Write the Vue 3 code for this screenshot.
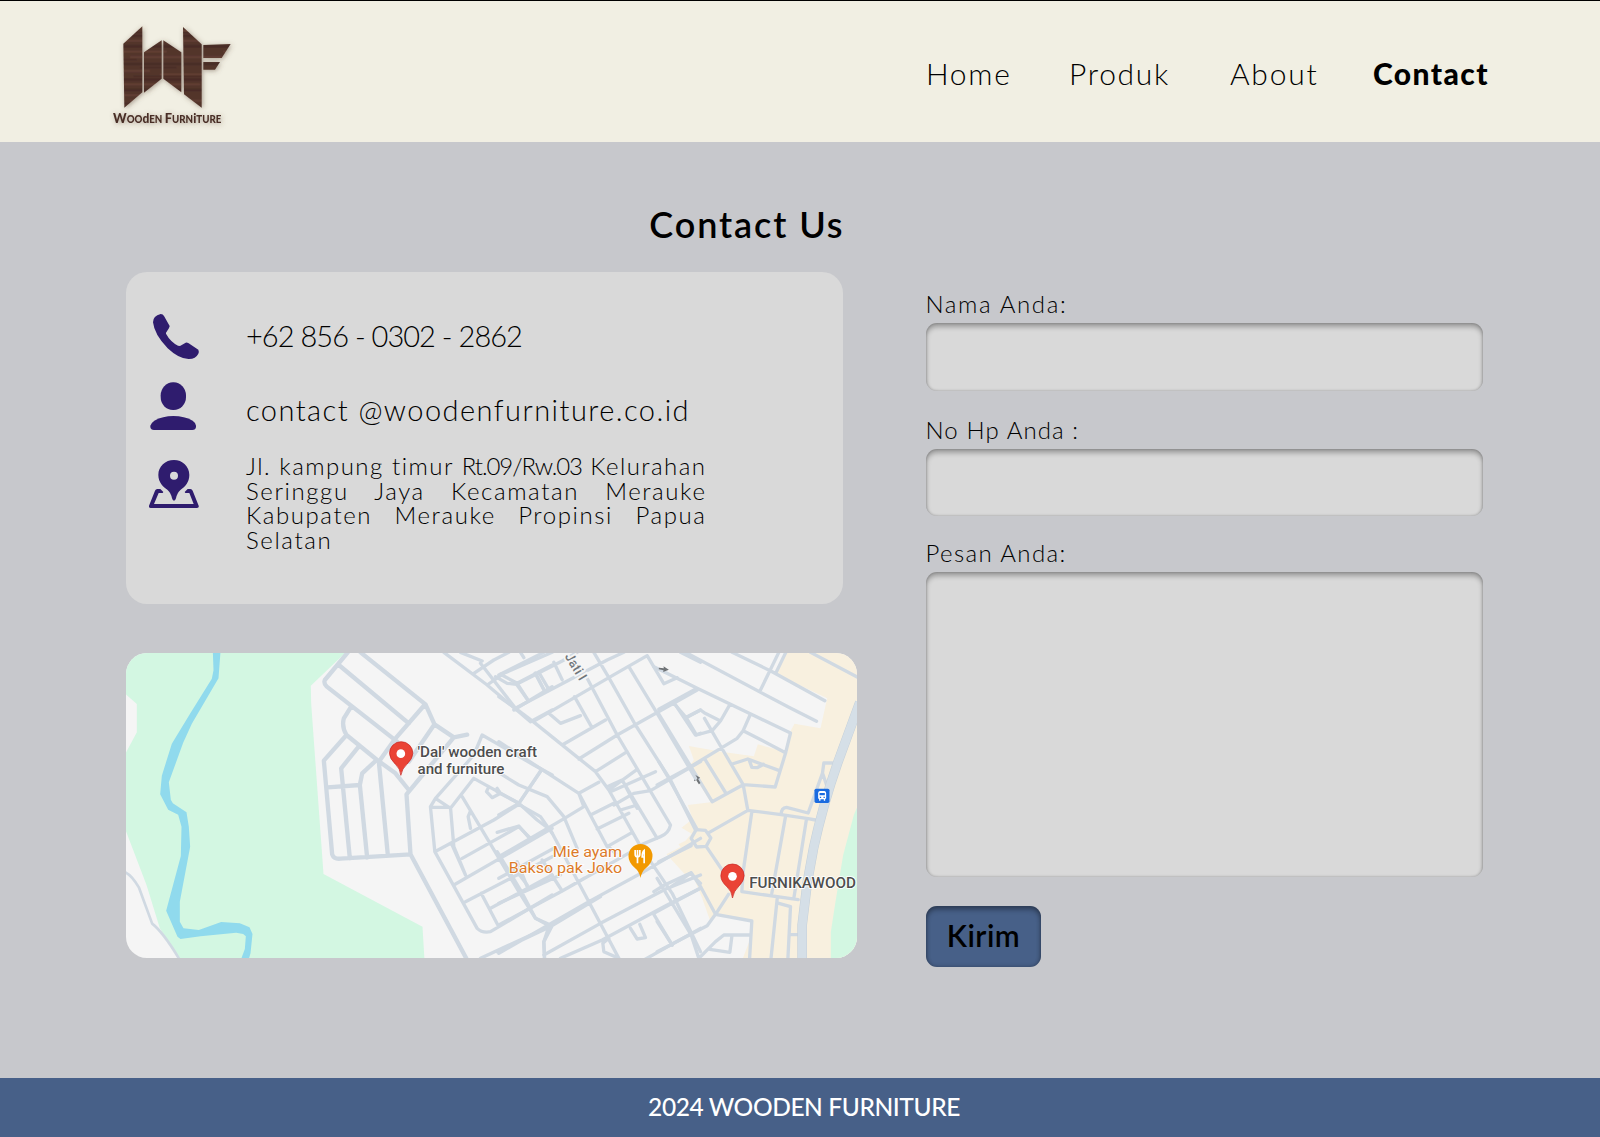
<script setup>
const links = [
  { label: 'Home', cls: 'home' },
  { label: 'Produk', cls: 'produk' },
  { label: 'About', cls: 'about' },
  { label: 'Contact', cls: 'contact' }
]
</script>

<template>
  <div class="page">
    <header class="header">
      <svg class="logo" width="140" height="120" viewBox="45 45 420 360" role="img" aria-label="Wooden Furniture">
        <defs>
          <pattern id="wood" width="400" height="131" patternUnits="userSpaceOnUse">
            <rect width="400" height="131" fill="#53342b" />
            <path d="M0 8H400M0 61H400M0 108H400" stroke="#482c25" stroke-width="8" />
            <path d="M0 24H230M120 40H400M0 82H180M210 92H400M60 122H330" stroke="#613e32" stroke-width="6" />
            <path d="M0 48H140M150 72H260M130 98H400" stroke="#482c25" stroke-width="4" />
          </pattern>
          <filter id="soft" x="-20%" y="-20%" width="140%" height="140%">
            <feDropShadow dx="3" dy="3" stdDeviation="8" flood-color="#5b4636" flood-opacity=".5" />
          </filter>
        </defs>
        <g filter="url(#soft)">
          <g fill="url(#wood)">
            <path d="M100 131 157 79V277L103 323Z" />
            <path d="M162 157 215 121V236L162 278Z" />
            <path d="M220 121 274 157V277L220 236Z" />
            <path d="M279 81 335 133V323L282 283Z" />
            <path d="M340 135 422 132 395 174H340Z" />
            <path d="M340 186H390L375 209H340Z" />
          </g>
          <text class="brand" x="69" y="369" textLength="325" lengthAdjust="spacingAndGlyphs"><tspan class="cap">W</tspan>OO<tspan class="mid">d</tspan>EN <tspan class="cap">F</tspan>URN<tspan class="mid">i</tspan>TURE</text>
        </g>
      </svg>
      <nav class="nav">
        <a v-for="l in links" :key="l.label" :class="l.cls">{{ l.label }}</a>
      </nav>
    </header>

    <main class="main">
      <section class="left">
        <h1>Contact Us</h1>
        <div class="card">
          <div class="row">
            <svg class="icon" viewBox="87 360 156 156"><path d="M122 372Q129 372 132 378L149 408Q149 413 138 428V431Q151 455 174 467L180 468L197 458Q201 457 206 460L235 479Q238 486 235 491Q227 507 207 507Q178 508 143 475Q103 434 99 397Q99 377 122 372Z" /></svg>
            <span class="big phone">+62 856 - 0302 - 2862</span>
          </div>
          <div class="row second">
            <svg class="icon" viewBox="87 570 156 156"><rect x="122" y="577" width="76" height="83" rx="37" ry="39" /><path d="M91 707Q92 700 103 692Q128 678 160 678Q193 678 218 692Q228 699 228 707V711Q227 720 217 720H102Q92 720 91 711Z" /></svg>
            <span class="big mail">contact @woodenfurniture.co.id</span>
          </div>
          <div class="row third">
            <svg class="icon" viewBox="87 804 156 156">
              <path fill-rule="evenodd" d="M162 810C187 810 208 829 208 855C208 877 195 890 182 899Q171 908 168 925Q166 932 162 932Q158 932 156 925Q153 908 142 899C129 890 115 877 115 855C115 829 136 810 162 810ZM162 845A12 12 0 1 0 162 869A12 12 0 1 0 162 845Z" />
              <path fill-rule="evenodd" d="M112 897H121L130 906L128 909H116L102 942H221L208 909H196L194 906L203 897H211Q216 897 218 902L236 947Q238 954 231 954H92Q86 954 87 947L105 902Q107 897 112 897Z" />
            </svg>
            <p class="address">
              <span class="first">Jl. kampung timur <i>Rt.09/Rw.03</i> Kelurahan</span>
              <span>Seringgu Jaya Kecamatan Merauke</span>
              <span>Kabupaten Merauke Propinsi Papua</span>
              <span class="last">Selatan</span>
            </p>
          </div>
        </div>

        <svg class="map" viewBox="125.5 653 731.5 305" preserveAspectRatio="none">
          <rect x="125" y="653" width="733" height="306" fill="#f5f5f5" />
          <!-- west: park and river -->
          <g transform="translate(120 645) scale(.33333)">
            <path fill="#d3f7e2" d="M15 20H678L571 122L572 175L609 687L906 845L912 945H178L118 850L78 720L15 555V325L49 262V177L15 147Z" />
            <path fill="#90daed" d="M277 20H300L294 100L214 236L188 293L145 412L151 464L157 475L198 502L205 545L209 605L178 770V830L189 850L235 855L302 831L358 835L387 847L396 867L390 925L385 942H362L373 912L376 874L368 867L347 863L240 874L180 882L171 875L137 797L181 633L183 545L173 509L143 494L119 448L124 392L154 296L210 204L274 101L279 76Z" />
            <path class="road thin" d="M15 682Q35 692 55 727Q78 790 95 836Q128 862 175 940" />
          </g>
          <!-- east: business area -->
          <g transform="translate(660 645) scale(.33333)">
            <path fill="#f8f0df" d="M376 20H600V945H510L507 940H247L270 880L270 830L165 810L150 830L125 760L92 680L75 690L18 628L60 606L54 598L75 587L93 566L63 548L96 522L82 480L150 472L85 365L100 345L85 303L183 320L280 334L292 298L380 322L388 262L402 236L480 250L500 160L348 88Z" />
            <path fill="#d3f7e2" d="M597 470L580 510L548 630L525 770L511 860V945H600V470Z" />
            <g class="road">
              <path d="M75 22L385 187L468 229M215 22L335 80L493 167M450 22L590 96M355 22L300 135M376 22L346 84M-20 65L110 130L390 264L375 325L344 426L248 419L180 303L132 220M-5 193L110 130M208 179L180 228L131 203L120 195L77 218L42 177M77 218L108 270L155 257L180 228M270 207L248 257L375 323M248 257L230 280L85 368L-10 420M215 357L262 342L355 376M266 345L274 367L290 368L309 358M134 344L194 441M-5 207L155 470L248 419L262 496L140 566M262 496L362 509L443 521L465 525M362 509Q362 488 378 487L443 504L486 384L490 354H516M486 384L500 425M-5 350L25 400L110 554M274 500L248 680L244 740L413 764M375 515L334 745M438 522L400 760M350 762L331 945M355 775L390 785L382 945M388 869H415M-5 650L92 602M137 604L185 675M204 748L165 808L140 842L-10 920M165 808L274 828L267 945M92 683L122 728L165 808M92 683L12 720L-20 740M122 728L35 775L-20 805M-10 700L35 775L92 870L115 940M-10 830L35 900M110 945L165 890L190 870H267M214 875L208 922L148 913" />
              <path class="circle" d="M107 554L135 556L151 579L137 604L108 606L92 580Z" />
            </g>
            <path d="M598 172Q561 272 532 352Q487 480 459 610L440 715L425 840V945" fill="none" stroke="#c5d0d9" stroke-width="29" />
            <path d="M598 172Q561 272 532 352Q487 480 459 610L440 715L425 840V945" fill="none" stroke="#d5dfe7" stroke-width="26" />
            <g fill="#6f7376">
              <path d="M-5 68L10 70L9 64L25 74L8 81L9 76L-5 73Z" />
              <path d="M101 388L119 398L113 402L120 414L115 418L107 405L101 409Z" />
            </g>
          </g>
          <!-- middle: residential streets -->
          <g transform="translate(500 645) scale(.33333)" class="road">
            <path d="M-60 55L45 190L98 230L235 340L285 380L325 435L415 595M-5 155L45 190L320 45L370 22M-5 90L130 22M98 230L325 98L440 32M60 22L70 38M-15 95L20 115L48 118L185 48L230 22M48 118L80 162M104 85L132 137M115 82L143 130M160 52L185 104M260 100L350 270L510 540Q505 565 480 575L420 600M280 22L325 98L405 240L510 405L585 555M385 65L470 205L585 400M440 32L490 116L530 98M540 22L600 52M222 155L274 247M145 205L180 235L240 212M185 300L315 225M235 342L350 270L590 135M285 380L380 320M325 435L410 373M320 425L365 405L410 490M330 440L465 380M365 405L470 580M340 480L400 445L450 437L600 350M360 495L410 480M235 445L295 412M235 445L320 605L390 565M270 510L340 475M290 552L385 505M320 602L345 625M-5 290L235 445L250 485L192 520L-5 635M-10 380L55 420L140 455L190 515L230 610M120 378L55 475L-5 510M-10 440L55 475L110 525L150 555L265 770L355 940M-10 562L55 543L90 583M-5 700L160 610M-5 775L180 690M185 738L410 610M125 645L185 738M50 650L80 725M-5 840L185 738L250 700M-5 925L265 770L430 680L600 580M155 842L300 755M130 930L300 835L500 730L600 690M420 605L515 745L600 920M155 842L130 890L132 940M-10 620L60 735L105 820L155 842M-10 920L155 842M505 730L570 685L600 715M390 850L410 882L435 878L418 838M460 808L515 900M180 940L305 885L500 780L600 730M355 940L310 920L307 895L325 880M430 945L600 850M522 175L585 270L600 265M560 215L600 195" />
          </g>
          <!-- northwest: village blocks -->
          <g transform="translate(300 645) scale(.33333)">
            <path class="road wide" d="M142 22L73 105Q69 115 78 124L290 290M180 22L375 178L402 238L460 277L500 269M115 60L325 235M372 180L285 280L235 350M402 238L325 350M152 185L130 220Q123 245 138 270L70 347L95 628Q100 643 120 641L330 628L318 448L460 277M138 270L230 345L285 385L325 435M172 308L122 370L148 640M225 348L185 385L178 420L200 638M235 350L262 630M82 427L178 420M330 628L500 945" />
            <path class="road" d="M430 22L560 120L690 230M480 22L545 48M520 85L580 45L625 22M560 120L610 85L755 22M600 88L650 115L680 162M650 115L755 60M640 195L755 125M690 230L755 195M705 85L732 138M390 485L405 460L520 330L545 270L700 360L755 390M405 460L450 490L520 400L655 475L720 380M390 487H450L460 605L495 690M390 487L403 620L530 850Q545 865 570 860L755 750M403 620L580 525L655 478L720 515L755 565M485 455L655 740L705 820L745 842M510 498L503 515L510 550M565 425L558 440L575 458L600 445L590 430M485 640L655 545L690 580M460 720L755 550M495 770L755 635M570 790L755 690M455 600L495 690M542 745L592 840M540 940L745 845L730 890L732 940M650 680L680 720" />
          </g>
          <g class="labels" transform="translate(120 645) scale(.33333)">
            <text class="street" transform="translate(1332 34) rotate(59)" textLength="88">Jati I</text>
            <text class="place" x="891" y="335" textLength="359" lengthAdjust="spacingAndGlyphs">'Dal' wooden craft</text>
            <text class="place" x="891" y="387" textLength="261" lengthAdjust="spacingAndGlyphs">and furniture</text>
            <text class="place food" x="1297" y="637" textLength="208" lengthAdjust="spacingAndGlyphs">Mie ayam</text>
            <text class="place food" x="1165" y="685" textLength="340" lengthAdjust="spacingAndGlyphs">Bakso pak Joko</text>
            <text class="place" x="1886" y="729" textLength="320" lengthAdjust="spacingAndGlyphs">FURNIKAWOOD</text>
            <g fill="#ea4335" stroke="#c5221f" stroke-width="2">
              <path d="M841 391Q839 370 825 358Q807 341 807 325A35 35 0 0 1 877 325Q877 341 859 358Q845 370 841 391Z" />
              <path d="M1836 759Q1834 738 1820 726Q1801 709 1801 692A35 35 0 0 1 1871 692Q1871 709 1853 726Q1840 738 1836 759Z" />
            </g>
            <circle cx="841" cy="326" r="13" fill="#fff" />
            <circle cx="1836" cy="694" r="13" fill="#fff" />
            <path fill="#f29900" d="M1560 699Q1557 680 1541 667Q1524 651 1524 633A36 36 0 0 1 1596 633Q1596 651 1579 667Q1563 680 1560 699Z" />
            <path d="M1544 615V627Q1544 636 1551 636Q1558 636 1558 627V615M1551 615V655M1571 655V616Q1565 620 1565 636H1571" fill="none" stroke="#fff" stroke-width="5" />
            <rect x="2082" y="431" width="45" height="43" rx="5" fill="#1a6be0" />
            <path fill="#fff" fill-rule="evenodd" d="M2098 438H2112Q2117 439 2117 444V460L2114 463V467H2110V463H2100V467H2096V463L2093 460V444Q2093 439 2098 438ZM2097 444V451H2113V444ZM2098 455V459H2102V455ZM2109 455V459H2113V455Z" />
          </g>
        </svg>
      </section>

      <form class="form" @submit.prevent>
        <label class="name" for="name">Nama Anda:</label>
        <input id="name" type="text" />
        <label class="tel" for="tel">No Hp Anda :</label>
        <input id="tel" type="text" />
        <label class="message" for="message">Pesan Anda:</label>
        <textarea id="message"></textarea>
        <button type="submit">Kirim</button>
      </form>
    </main>

    <footer class="footer">2024 WOODEN FURNITURE</footer>
  </div>
</template>

<style>
body { margin: 0; background: #c7c8cc; }
</style>

<style scoped>
* { box-sizing: border-box; }
.page { width: 1600px; height: 1137px; display: flex; flex-direction: column; font-family: Lato, "Open Sans", sans-serif; font-weight: 300; color: #000; background: #c7c8cc; overflow: hidden; }
.header { height: 142px; flex: none; border-top: 1px solid #000; background: #f1efe3; display: flex; padding-left: 105px; }
.logo { margin-top: 14px; flex: none; overflow: visible; }
.brand { font-family: Lato, sans-serif; font-weight: 900; font-size: 31px; fill: #4a2e26; }
.brand .cap { font-size: 41px; }
.brand .mid { font-size: 38px; }
.nav { display: flex; margin: 54px 0 0 681px; font-size: 30px; line-height: 36px; white-space: nowrap; }
.home { width: 143px; letter-spacing: 1.7px; }
.produk { width: 161px; letter-spacing: 1.7px; }
.about { width: 143px; letter-spacing: 1.8px; }
.contact { font-weight: 900; letter-spacing: 1.4px; }
.main { height: 936px; flex: none; display: flex; padding-left: 125.5px; }
.left { width: 731.5px; flex: none; display: flex; flex-direction: column; }
h1 { margin: 60px 12.5px 26px 0; font-size: 36px; line-height: 44px; font-weight: 600; letter-spacing: 1.9px; text-align: right; }
.card { width: 717.5px; height: 332px; border-radius: 21px; background: #d9d9d9; padding: 38px 0 0 23.5px; }
.row { display: flex; height: 52px; align-items: center; }
.second { margin-top: 18px; }
.third { margin-top: 22px; height: auto; align-items: flex-start; }
.icon { width: 52px; height: 52px; fill: #2f1c6e; flex: none; margin-right: 45px; }
.third .icon { margin-top: 4px; }
.big { font-size: 29px; line-height: 52px; white-space: nowrap; }
.phone { letter-spacing: -.97px; }
.mail { padding-top: 7px; letter-spacing: 1.45px; }
.address { width: 460.5px; margin: 0; font-size: 24px; line-height: 24.5px; letter-spacing: 1.6px; }
.address span { display: block; text-align: justify; text-align-last: justify; white-space: nowrap; }
.address .first { letter-spacing: 1.45px; }
.address i { font-style: normal; letter-spacing: -1.05px; }
.address .last { text-align-last: left; }
.map { width: 731.5px; height: 305px; margin-top: 49px; border-radius: 21px; display: block; }
.road { fill: none; stroke: #d0d9e2; stroke-width: 10; stroke-linejoin: round; stroke-linecap: round; }
.road.wide { stroke-width: 13; }
.road.thin { stroke-width: 8; }
.road .circle { fill: #f8f0df; }
.labels text { font-family: Roboto, sans-serif; }
.place { font-size: 45px; font-weight: 500; fill: #4d4d4d; stroke: #fff; stroke-width: 5; paint-order: stroke; }
.place.food { fill: #dc7a28; font-weight: 400; }
.street { font-size: 40px; fill: #70757a; font-weight: 500; stroke: #f5f5f5; stroke-width: 12; paint-order: stroke; }
.form { width: 557.5px; margin-left: 68.5px; padding-top: 147px; display: flex; flex-direction: column; }
label { height: 30px; line-height: 30px; font-size: 24px; margin-bottom: 4px; white-space: nowrap; flex: none; }
.name { letter-spacing: 1.65px; }
.tel { margin-top: 24px; letter-spacing: 1.1px; }
.message { margin-top: 22px; letter-spacing: 1.4px; }
input, textarea { display: block; width: 557.5px; height: 67.5px; flex: none; margin: 0; padding: 10px 16px; border: 0; border-radius: 11px; background: #d9d9d9; box-shadow: inset 0 4px 5px rgba(0, 0, 0, .28), inset 0 0 3px rgba(0, 0, 0, .28); resize: none; outline: 0; font: inherit; }
textarea { height: 304.5px; }
button { width: 115px; height: 61px; flex: none; margin: 29.5px 0 0; padding: 0 0 4px 1px; border: 0; border-radius: 11px; background: #476088; box-shadow: inset 0 4px 5px rgba(0, 0, 0, .28), inset 0 0 4px rgba(0, 0, 0, .3); font: 600 30px/36px Lato, sans-serif; letter-spacing: .5px; color: #000; }
.footer { flex: 1; background: #476088; color: #fff; display: flex; align-items: center; justify-content: center; font-size: 24.5px; line-height: 30px; font-weight: 500; letter-spacing: -.4px; padding: 0 0 2px 8px; }
</style>
